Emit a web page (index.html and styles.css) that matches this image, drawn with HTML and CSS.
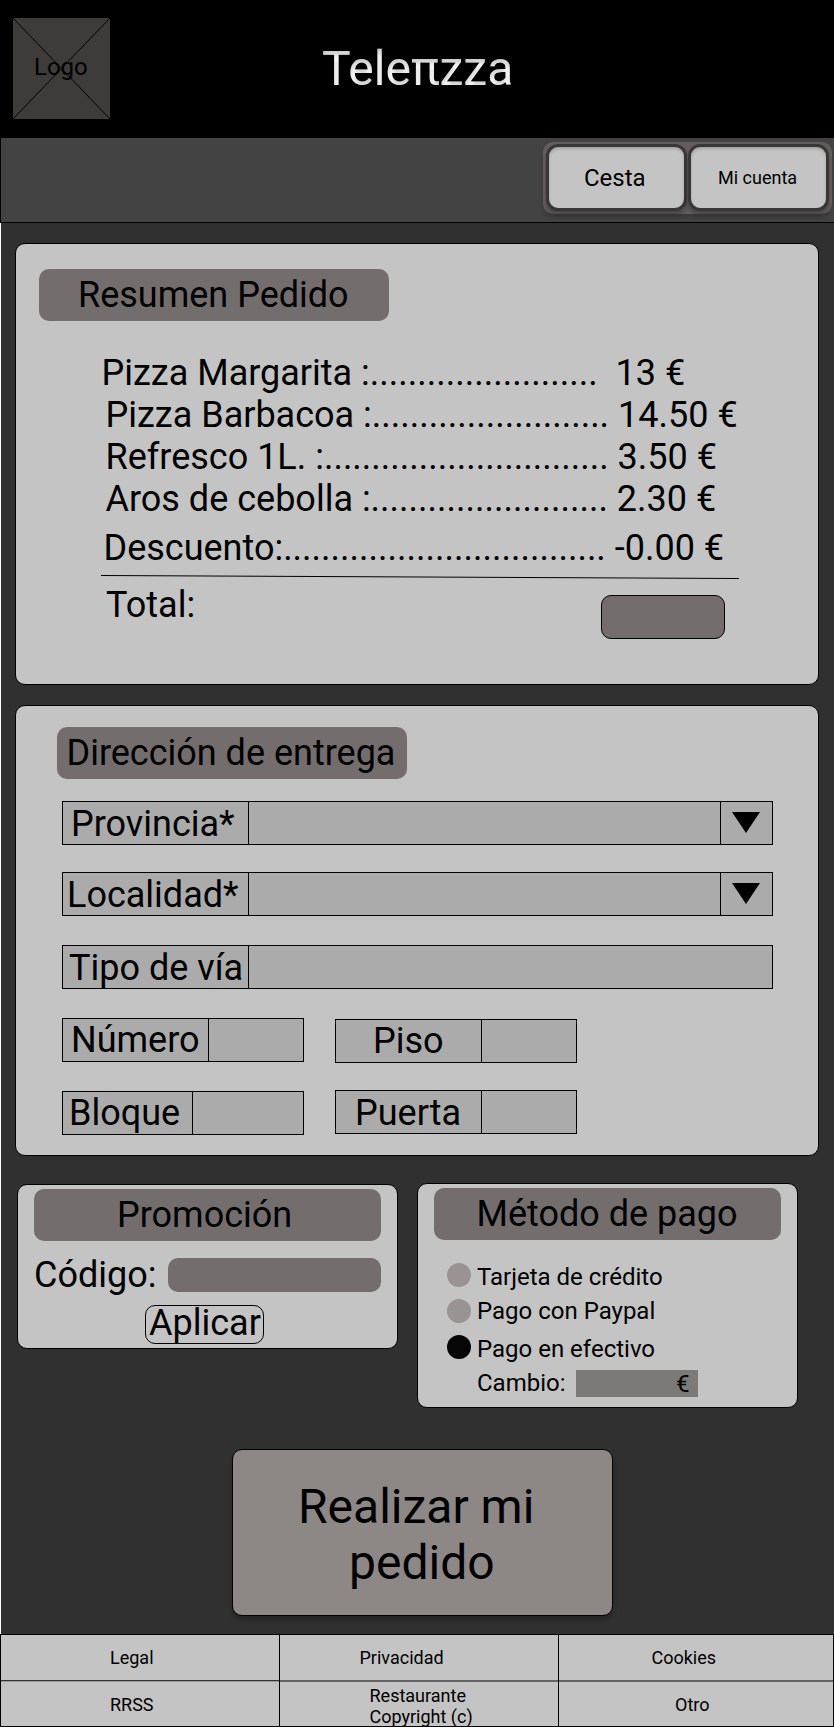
FILE: index.html
```html
<!DOCTYPE html>
<html lang="es">
<head>
<meta charset="utf-8">
<title>Teleπzza</title>
<link rel="stylesheet" href="styles.css">
</head>
<body>
<svg class="defs" width="0" height="0" aria-hidden="true">
  <filter id="inner-shadow" x="-5%" y="-20%" width="110%" height="140%" color-interpolation-filters="sRGB">
    <feOffset in="SourceAlpha" dy="4" result="off"/>
    <feGaussianBlur in="off" stdDeviation="2" result="blur"/>
    <feComposite in="SourceAlpha" in2="blur" operator="arithmetic" k2="1" k3="-1" result="inner"/>
    <feColorMatrix in="inner" type="matrix" values="0 0 0 0 0  0 0 0 0 0  0 0 0 0 0  0 0 0 0.2 0" result="shade"/>
    <feMerge><feMergeNode in="SourceGraphic"/><feMergeNode in="shade"/></feMerge>
  </filter>
</svg>
<header class="header">
  <div class="logo">
    <svg class="logo-cross" viewBox="0 0 97 101"><path d="M0 0L97 101M97 0L0 101" stroke="#000" fill="none"/></svg>
    <span class="logo-text">Logo</span>
  </div>
  <h1 class="title">Teleπzza</h1>
</header>
<nav class="nav">
  <div class="nav-group">
    <button class="nav-btn nav-cart">Cesta</button>
    <button class="nav-btn nav-account">Mi cuenta</button>
  </div>
</nav>
<main class="main">
  <section class="card summary">
    <h2 class="pill pill-summary">Resumen Pedido</h2>
    <div class="lines">
      <p class="line line-first">Pizza Margarita :........................  13 €</p>
      <p class="line">Pizza Barbacoa :......................... 14.50 €</p>
      <p class="line">Refresco 1L. :.............................. 3.50 €</p>
      <p class="line line-fries">Aros de cebolla :......................... 2.30 €</p>
      <p class="line line-discount">Descuento:.................................. -0.00 €</p>
    </div>
    <svg class="rule" viewBox="0 0 638 4"><path d="M0 0.5L638 3.5" stroke="#000" fill="none"/></svg>
    <div class="total">
      <span class="total-label">Total:</span>
      <span class="total-box"></span>
    </div>
  </section>

  <section class="card address">
    <h2 class="pill pill-address">Dirección de entrega</h2>
    <div class="field field-province"><span class="label">Provincia*</span><span class="value"></span><span class="arrow"><svg width="28" height="21" viewBox="0 0 28 21"><path d="M0 0H28L14 21Z"/></svg></span></div>
    <div class="field field-city"><span class="label">Localidad*</span><span class="value"></span><span class="arrow"><svg width="28" height="21" viewBox="0 0 28 21"><path d="M0 0H28L14 21Z"/></svg></span></div>
    <div class="field field-street"><span class="label">Tipo de vía</span><span class="value"></span></div>
    <div class="small-fields">
      <div class="col col-left">
        <div class="field field-number"><span class="label">Número</span><span class="value"></span></div>
        <div class="field field-block"><span class="label">Bloque</span><span class="value"></span></div>
      </div>
      <div class="col col-right">
        <div class="field field-floor"><span class="label">Piso</span><span class="value"></span></div>
        <div class="field field-door"><span class="label">Puerta</span><span class="value"></span></div>
      </div>
    </div>
  </section>

  <div class="pair">
    <section class="card promo">
      <h2 class="pill pill-promo">Promoción</h2>
      <div class="code"><span class="code-label">Código:</span><span class="code-input"></span></div>
      <button class="apply">Aplicar</button>
    </section>
    <section class="card payment">
      <h2 class="pill pill-payment">Método de pago</h2>
      <div class="options">
        <div class="radios"><i class="radio"></i><i class="radio"></i><i class="radio radio-on"></i></div>
        <div class="option-texts">
          <span class="option">Tarjeta de crédito</span>
          <span class="option option-paypal">Pago con Paypal</span>
          <span class="option option-cash">Pago en efectivo</span>
          <div class="change"><span class="change-label">Cambio:</span><span class="change-input">€</span></div>
        </div>
      </div>
    </section>
  </div>

  <button class="order"><span class="order-top">Realizar mi</span><span class="order-bottom">pedido</span></button>
</main>
<footer class="footer">
  <a class="cell cell-legal">Legal</a>
  <a class="cell cell-privacy">Privacidad</a>
  <a class="cell cell-cookies">Cookies</a>
  <a class="cell cell-rrss">RRSS</a>
  <a class="cell cell-copy">Restaurante<br>Copyright (c)</a>
  <a class="cell cell-other">Otro</a>
</footer>
</body>
</html>
```
FILE: styles.css
```css
* { box-sizing: border-box; }

body {
  margin: 0;
  width: 834px;
  height: 1727px;
  background: #fff;
  color: #000;
  font-family: Roboto, "Liberation Sans", sans-serif;
  font-size: 36px;
  line-height: 42px;
  overflow: hidden;
}

h1, h2, p { margin: 0; font-weight: 400; }
svg { display: block; }
button { font: inherit; color: inherit; padding: 0; margin: 0; text-align: left; }
.defs { position: absolute; }

/* Header */
.header {
  display: flex;
  align-items: flex-start;
  height: 138px;
  padding: 18px 0 0 13px;
  background: #000;
}
.logo {
  display: grid;
  width: 97px;
  height: 101px;
  background: #3e3c3a;
}
.logo-cross, .logo-text { grid-area: 1 / 1; }
.logo-cross { width: 97px; height: 101px; }
.logo-text {
  padding: 35px 0 0 21px;
  font-size: 24px;
  line-height: 28px;
}
.title {
  margin: 23px 0 0 212px;
  font-size: 48px;
  line-height: 56px;
  color: #fff;
  filter: url(#inner-shadow);
}

/* Navigation */
.nav {
  display: flex;
  justify-content: flex-end;
  height: 85px;
  padding: 4px 2px 0 0;
  border-left: 1px solid #000;
  border-bottom: 1px solid #000;
  background: #434343;
}
.nav-group {
  display: flex;
  gap: 1px;
  width: 289px;
  height: 72px;
  padding: 2px 3px;
  border-radius: 10px;
  background: #645d5d;
  box-shadow: 0 4px 4px rgba(0, 0, 0, .12);
}
.nav-btn {
  width: 141px;
  height: 67px;
  border: 3px solid #373737;
  border-radius: 12px;
  background: #c4c4c4;
  box-shadow: 0 4px 4px rgba(0, 0, 0, .25), inset 0 2px 3px rgba(0, 0, 0, .18);
}
.nav-cart { padding: 0 0 0 35px; font-size: 24px; line-height: 28px; }
.nav-account { padding: 0 0 0 27px; font-size: 18px; line-height: 21px; }

/* Main column */
.main {
  height: 1411px;
  margin-left: 1px;
  padding: 20px 0 0 14px;
  background: #303030;
}
.card {
  border: 1px solid #000;
  border-radius: 10px;
  background: #c4c4c4;
}
.pill {
  height: 52px;
  padding-top: 5px;
  border-radius: 10px;
  background: #736d6d;
  font-size: 36px;
  line-height: 42px;
  white-space: nowrap;
}

/* Order summary */
.summary { width: 804px; height: 442px; padding: 25px 0 0 23px; }
.pill-summary { width: 350px; padding-left: 39px; }
.lines { padding: 31px 0 0 66.5px; }
.line { white-space: pre; }
.line-first { margin-left: -4px; }
.line-discount { margin: 7px 0 0 -2px; }
.rule { width: 638px; height: 4px; margin: 6px 0 0 62px; }
.total { display: flex; padding-left: 67px; }
.total-label { width: 495px; padding-top: 5px; }
.total-box {
  width: 124px;
  height: 44px;
  margin-top: 16px;
  border: 1px solid #000;
  border-radius: 10px;
  background: #736d6d;
}

/* Delivery address */
.address { width: 804px; height: 451px; margin-top: 20px; padding: 21px 0 0 46px; }
.pill-address { width: 350px; margin-left: -5px; padding-left: 9.5px; }
.field {
  display: flex;
  width: 711px;
  height: 44px;
  border: 1px solid #000;
  background: #ababab;
}
.label {
  width: 186px;
  padding-top: 1px;
  border-right: 1px solid #000;
  white-space: nowrap;
}
.value { flex: 1; }
.arrow { width: 52px; padding: 10px 0 0 11px; border-left: 1px solid #000; }
.field-province { margin-top: 22px; }
.field-city { margin-top: 27px; }
.field-street { margin-top: 29px; }
.field-province .label { padding-left: 8px; }
.field-city .label { padding-left: 4px; }
.field-street .label { padding-left: 6px; }
.small-fields { display: flex; gap: 31px; margin-top: 29px; }
.col { display: flex; flex-direction: column; }
.col-left { gap: 29px; }
.col-right { gap: 27px; padding-top: 1px; }
.col .field { width: 242px; margin-top: 0; }
.col .label { width: 146px; padding-top: 0; }
.field-number .label { padding-left: 8px; }
.col .field-block .label { width: 130px; padding-left: 6px; }
.field-floor .label { padding-left: 37px; }
.col .field-door .label { padding: 1px 0 0 19px; }

/* Promotion and payment */
.pair { display: flex; align-items: flex-start; gap: 19px; padding: 27px 0 0 2px; }
.promo { width: 381px; height: 165px; margin-top: 1px; padding: 4px 16px 0; }
.pill-promo { padding-left: 83px; }
.code { display: flex; height: 64px; padding-top: 13px; }
.code-label { width: 134px; }
.code-input {
  width: 213px;
  height: 34px;
  margin-top: 4px;
  border-radius: 10px;
  background: #736d6d;
}
.apply {
  display: flex;
  width: 119px;
  height: 39px;
  margin-left: 111px;
  padding-left: 3px;
  border: 1px solid #000;
  border-radius: 10px;
  background: none;
  line-height: 35px;
}
.payment { width: 381px; height: 225px; padding: 4px 16px 0; }
.pill-payment { padding-left: 42.5px; }
.options { display: flex; gap: 6px; padding: 23px 0 0 13px; font-size: 24px; line-height: 28px; }
.radios { display: flex; flex-direction: column; gap: 12px; }
.radio { width: 24px; height: 24px; border-radius: 50%; background: #999493; }
.radio-on { background: #060606; }
.option-texts { display: flex; flex-direction: column; }
.option { white-space: nowrap; }
.option-paypal { margin-top: 6px; }
.option-cash { margin-top: 10px; }
.change { display: flex; padding-top: 6px; }
.change-label { width: 99px; }
.change-input {
  width: 122px;
  height: 27px;
  margin-top: 1px;
  padding: 0 0 0 100px;
  background: #7c7979;
}

/* Place order */
.order {
  display: block;
  width: 381px;
  height: 167px;
  margin: 41px 0 0 217px;
  padding-top: 5px;
  border: 1px solid #000;
  border-radius: 10px;
  background: #8d8786;
  box-shadow: 0 4px 4px rgba(0, 0, 0, .25);
  font-size: 48px;
  line-height: 56px;
}
.order-top { display: block; padding-left: 65px; }
.order-bottom { display: block; padding-left: 116px; }

/* Footer */
.footer {
  display: grid;
  grid-template-columns: 279px 279px 274px;
  grid-template-rows: 47px 44px;
  height: 93px;
  border: 1px solid #000;
  background: #c4c4c4;
  font-size: 18px;
  line-height: 21px;
}
.cell { border-right: 1px solid #000; }
.cell-cookies, .cell-other { border-right: 0; }
.cell-legal, .cell-privacy, .cell-cookies { padding-top: 12px; background: linear-gradient(#646464, #646464) 0 100% / 100% 2px no-repeat; }
.cell-legal { padding-left: 109px; background: linear-gradient(#333 50%, #999 50%) 0 100% / 100% 2px no-repeat; }
.cell-privacy { padding-left: 79.5px; }
.cell-cookies { padding-left: 92.5px; }
.cell-rrss { padding: 12px 0 0 109px; }
.cell-copy { padding: 3px 0 0 89.5px; }
.cell-other { padding: 12px 0 0 116px; }
```
